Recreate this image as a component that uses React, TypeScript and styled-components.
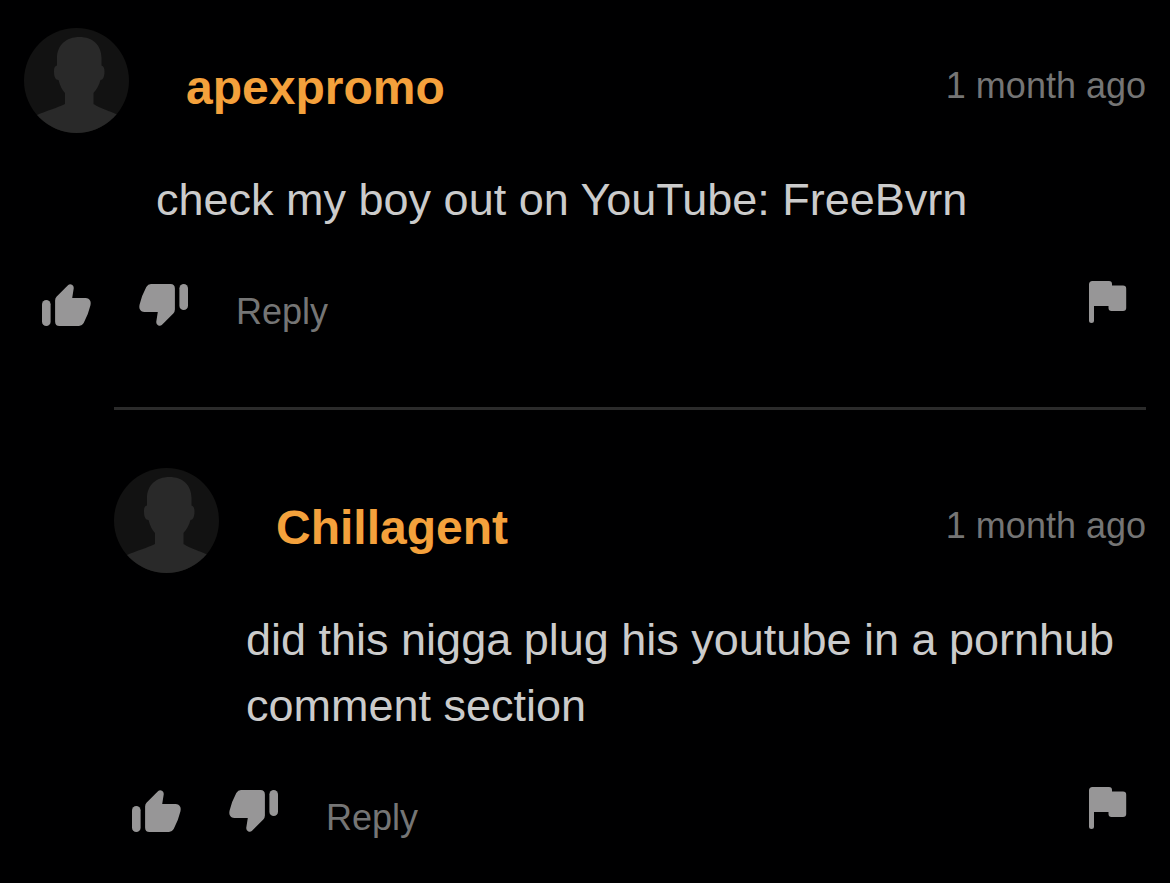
import React from "react";
import styled, { createGlobalStyle } from "styled-components";

const GlobalStyle = createGlobalStyle`
  * { box-sizing: border-box; }
  body {
    margin: 0;
    background: #000001;
    font-family: "Liberation Sans", Arial, Helvetica, sans-serif;
  }
`;

const Thread = styled.main`
  padding: 28px 24px 44px;
`;

const CommentCard = styled.article`
  color: #cbcbcb;
`;

const Replies = styled.section`
  margin: 75px 0 0 90px;
  padding-top: 58px;
  border-top: 3px solid #2b2b2b;
`;

const Header = styled.header`
  display: flex;
  align-items: center;
`;

const AvatarLink = styled.a`
  display: block;
  flex: none;
  height: 105px;
  border-radius: 50%;
`;

const UserName = styled.a`
  margin-left: 57px;
  padding-top: 14px;
  color: #f4a13c;
  font-size: 48px;
  font-weight: 700;
  line-height: 56px;
  text-decoration: none;
`;

const Time = styled.time`
  margin-left: auto;
  padding-top: 10px;
  color: #757575;
  font-size: 36px;
  line-height: 40px;
  white-space: nowrap;
`;

const Message = styled.p`
  margin: 34px 0 0 132px;
  font-size: 45px;
  line-height: 66px;
`;

const Actions = styled.div`
  display: flex;
  align-items: center;
  gap: 48px;
  margin-top: 45px;
  padding: 0 19px 0 18px;
`;

const IconButton = styled.button<{ $end?: boolean }>`
  display: block;
  margin: 0 0 0 ${(p) => (p.$end ? "auto" : "0")};
  padding: 0 0 ${(p) => (p.$end ? "6px" : "0")};
  border: 0;
  background: none;
  color: #979697;
  cursor: pointer;

  svg {
    display: block;
    fill: currentColor;
  }
`;

const ReplyButton = styled.button`
  margin: 0;
  padding: 14px 0 0;
  border: 0;
  background: none;
  color: #757575;
  font-family: inherit;
  font-size: 36px;
  line-height: 40px;
  cursor: pointer;
`;

const AvatarIcon = () => (
  <svg width="105" height="105" viewBox="0 0 105 105" aria-hidden="true">
    <defs>
      <clipPath id="avatar-circle">
        <circle cx="52.5" cy="52.5" r="52.5" />
      </clipPath>
    </defs>
    <circle cx="52.5" cy="52.5" r="52.5" fill="#121212" />
    <path
      clipPath="url(#avatar-circle)"
      fill="#292929"
      d="M55.500 9C42 9 33 17.500 33 30V37.500C30.500 38 30 40 30 43.500C30 49 31.500 52 34.500 52C36 57.500 38 62 41 65V76C33 80 22 83 13 87V105H93V86.500C86 83 77 81 69.500 76V65C73 61 75 57.500 76.500 52C79 52 80.500 48.500 80.500 43.500C80.500 40 79.500 38 77.500 37.500V30C77.500 17.500 69 9 55.500 9Z"
    />
  </svg>
);

const ThumbIcon = ({ down }: { down?: boolean }) => (
  <svg width="49" height="42" viewBox="0 0 49 42" aria-hidden="true">
    <g transform={down ? "rotate(180 24.5 21)" : undefined}>
      <rect x="0" y="16" width="8.6" height="26" rx="4.300" />
      <path d="M13.100 16.500Q13.100 14.300 14.700 12.600L26.200 1Q28 -.5 30 .8Q32 2 31.700 4.500L30.200 14H43.500Q47 14 48.300 17Q49 19 48.400 21.500Q46.300 30.500 41.700 39Q40 42 37 42H17.500Q13.100 42 13.100 37.500Z" />
    </g>
  </svg>
);

const FlagIcon = () => (
  <svg width="38" height="42" viewBox="0 0 38 42" aria-hidden="true">
    <path d="M3.500 0H20Q23 0 23 3V4.500H34Q37.200 4.500 37.200 7.500V27Q37.200 30 34 30H22.500Q19.500 30 19.500 27V25H5V39.500A2.500 2.500 0 0 1 0 39.500V3.500Q0 0 3.500 0Z" />
  </svg>
);

interface CommentProps {
  user: string;
  time: string;
  text: string;
}

const Comment = ({ user, time, text }: CommentProps) => (
  <CommentCard>
    <Header>
      <AvatarLink href="#" aria-label={user}>
        <AvatarIcon />
      </AvatarLink>
      <UserName href="#">{user}</UserName>
      <Time>{time}</Time>
    </Header>
    <Message>{text}</Message>
    <Actions>
      <IconButton type="button" aria-label="Like">
        <ThumbIcon />
      </IconButton>
      <IconButton type="button" aria-label="Dislike">
        <ThumbIcon down />
      </IconButton>
      <ReplyButton type="button">Reply</ReplyButton>
      <IconButton type="button" aria-label="Report" $end>
        <FlagIcon />
      </IconButton>
    </Actions>
  </CommentCard>
);

export default function App() {
  return (
    <>
      <GlobalStyle />
      <Thread>
        <Comment
          user="apexpromo"
          time="1 month ago"
          text="check my boy out on YouTube: FreeBvrn"
        />
        <Replies>
          <Comment
            user="Chillagent"
            time="1 month ago"
            text="did this nigga plug his youtube in a pornhub comment section"
          />
        </Replies>
      </Thread>
    </>
  );
}
